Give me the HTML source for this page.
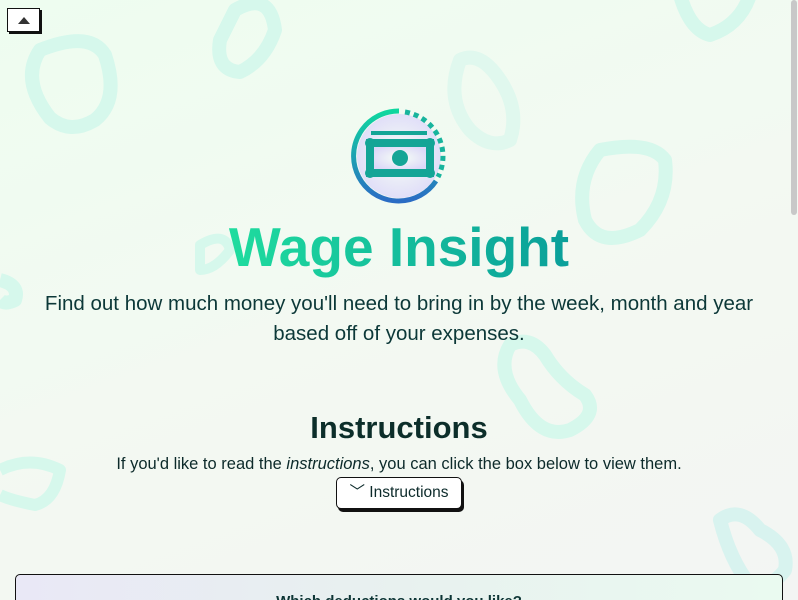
<!DOCTYPE html>
<html><head><meta charset="utf-8"><style>
html,body{margin:0;padding:0;width:798px;height:600px;overflow:hidden}
body{background:linear-gradient(160deg,#eefdf0 0%,#f3f9f2 50%,#f3f5f3 100%);font-family:"Liberation Sans",sans-serif;position:relative;color:#0d3535}
.bg{position:absolute;left:0;top:0}
.top{position:absolute;left:7px;top:8px;width:33px;height:24px;border:1.5px solid #111;background:#fff;box-shadow:2px 2px 0 #111;box-sizing:border-box}
.top:after{content:"";position:absolute;left:10px;top:8px;border-left:6px solid transparent;border-right:6px solid transparent;border-bottom:7px solid #333}
h1{position:absolute;left:0;width:798px;top:215px;margin:0;text-align:center;font-size:55px;font-weight:bold;letter-spacing:0px;color:#12c3a0}
h1 span{background:linear-gradient(90deg,#1fdc9e,#0a9f9a);-webkit-background-clip:text;background-clip:text;color:transparent}
.sub{position:absolute;left:0;width:798px;top:289px;text-align:center;font-size:20.5px;line-height:30px;color:#0c3838}
h2{position:absolute;left:0;width:798px;top:410px;margin:0;text-align:center;font-size:31px;font-weight:bold;color:#0c2e2a}
.p{position:absolute;left:0;width:798px;top:455px;text-align:center;font-size:16.5px;color:#0c2a2a}
.btn{position:absolute;left:336px;top:477px;width:126px;height:32px;border:1.5px solid #111;border-radius:5px;background:#fff;box-shadow:2px 3px 0 #111;box-sizing:border-box;font-size:15.5px;line-height:29px;text-align:center;color:#0c2a2a}
.card{position:absolute;left:15px;top:574px;width:768px;height:40px;border:1.5px solid #111;border-radius:5px;background:linear-gradient(90deg,#e9e8f6,#e8f1ef,#eafaf0);box-sizing:border-box}
.card span{position:absolute;left:0;width:100%;top:18px;text-align:center;font-weight:bold;font-size:15px}
.sb{position:absolute;top:0;width:6px;height:215px;background:#c8c8c8;border-radius:3px;right:1px}
</style></head><body>
<svg class="bg" width="798" height="600" fill="none" stroke="#d6f8ec" stroke-width="14" stroke-linejoin="round">
<path d="M40 50 Q90 30 105 55 Q120 100 95 120 Q70 135 50 118 Q20 80 40 50Z"/>
<path d="M235 10 Q270 -10 275 30 Q265 60 240 72 Q215 70 220 40Z"/>
<path d="M460 60 Q480 50 500 80 Q520 110 510 140 Q490 150 470 130 Q445 100 460 60Z" stroke="#e0f8ee"/>
<path d="M600 150 Q650 140 665 160 Q670 200 640 230 Q600 250 585 220 Q575 180 600 150Z"/>
<path d="M680 -5 Q690 30 710 35 Q740 25 750 -5"/>
<path d="M200 245 Q225 230 230 250 Q215 270 200 270Z" stroke-width="10"/>
<path d="M0 280 Q20 285 15 300 Q5 305 0 300"/>
<path d="M510 345 Q530 335 545 355 Q560 380 585 395 Q600 415 570 430 Q540 440 520 400 Q495 370 510 345Z"/>
<path d="M0 470 Q30 455 60 470 Q55 500 35 505 Q10 500 0 495" stroke-width="12"/>
<path d="M720 520 Q740 505 760 530 Q790 545 785 570 Q770 590 750 585 Q730 560 720 520Z" stroke="#d8f3ef"/>
</svg>
<div class="sb"></div>
<div class="top"></div>
<svg style="position:absolute;left:350px;top:107px" width="98" height="98" viewBox="0 0 98 98">
<defs><linearGradient id="g" x1="0" y1="0" x2="0" y2="1"><stop offset="0" stop-color="#0fd79f"/><stop offset="1" stop-color="#2b6cc4"/></linearGradient>
<radialGradient id="f" cx=".5" cy=".5" r=".6"><stop offset="0" stop-color="#f7fff6"/><stop offset="1" stop-color="#dcd8f8"/></radialGradient></defs>
<circle cx="49" cy="49" r="42" fill="url(#f)"/>
<path d="M49 4 A45 45 0 1 0 86 74" stroke="url(#g)" stroke-width="5" fill="none"/>
<path d="M55 5 A45 45 0 0 1 88 70" stroke="#18b49d" stroke-width="5" fill="none" stroke-dasharray="5 4"/>
<rect x="21" y="24" width="56" height="4" fill="#14a596"/>
<rect x="16" y="32" width="68" height="38" fill="#14a596"/>
<path d="M24 40 h52 v22 h-52z" fill="url(#f)"/>
<circle cx="50" cy="51" r="8" fill="#14a596"/>
<circle cx="20" cy="36" r="5" fill="#14a596"/><circle cx="80" cy="36" r="5" fill="#14a596"/><circle cx="20" cy="66" r="5" fill="#14a596"/><circle cx="80" cy="66" r="5" fill="#14a596"/>
</svg>
<h1><span>Wage Insight</span></h1>
<div class="sub">Find out how much money you'll need to bring in by the week, month and year<br>based off of your expenses.</div>
<h2>Instructions</h2>
<div class="p">If you'd like to read the <i>instructions</i>, you can click the box below to view them.</div>
<div class="btn">﹀ Instructions</div>
<div class="card"><span>Which deductions would you like?</span></div>
</body></html>
